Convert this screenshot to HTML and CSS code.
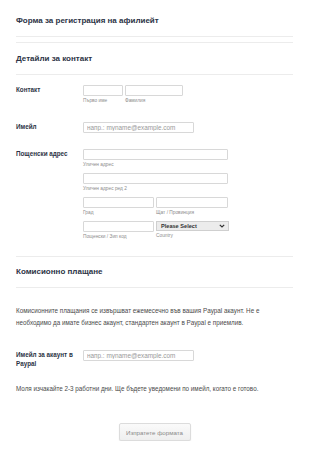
FILE: index.html
```html
<!DOCTYPE html>
<html lang="bg">
<head>
  <meta charset="UTF-8">
  <meta name="viewport" content="width=device-width, initial-scale=1.0">
  <title>Форма за регистрация на афилиейт</title>
  <link rel="stylesheet" href="styles.css">
</head>
<body>
  <form class="form">
    <div class="form-header first">
      <h1>Форма за регистрация на афилиейт</h1>
    </div>

    <div class="form-header">
      <h2>Детайли за контакт</h2>
    </div>

    <div class="row row-contact">
      <label class="row-label">Контакт</label>
      <div class="fields">
        <div class="field w-first">
          <input type="text">
          <span class="sub">Първо име</span>
        </div>
        <div class="field w-last">
          <input type="text">
          <span class="sub">Фамилия</span>
        </div>
      </div>
    </div>

    <div class="row row-email">
      <label class="row-label">Имейл</label>
      <div class="fields">
        <input class="w-email" type="text" placeholder="напр.: myname@example.com">
      </div>
    </div>

    <div class="row row-address">
      <label class="row-label">Пощенски адрес</label>
      <div class="address">
        <div class="field full">
          <input type="text">
          <span class="sub">Уличен адрес</span>
        </div>
        <div class="field full">
          <input type="text">
          <span class="sub">Уличен адрес ред 2</span>
        </div>
        <div class="field">
          <input type="text">
          <span class="sub">Град</span>
        </div>
        <div class="field">
          <input type="text">
          <span class="sub">Щат / Провинция</span>
        </div>
        <div class="field">
          <input type="text">
          <span class="sub">Пощенски / Зип код</span>
        </div>
        <div class="field">
          <div class="select">
            <span>Please Select</span>
            <svg width="6" height="4" viewBox="0 0 6 4"><path d="M0.8 0.8 L3 3 L5.2 0.8" fill="none" stroke="#333" stroke-width="1.2"/></svg>
          </div>
          <span class="sub">Country</span>
        </div>
      </div>
    </div>

    <div class="form-header section">
      <h2>Комисионно плащане</h2>
    </div>

    <p class="text first-text">Комисионните плащания се извършват ежемесечно във вашия Paypal акаунт. Не е необходимо да имате бизнес акаунт, стандартен акаунт в Paypal е приемлив.</p>

    <div class="row row-paypal">
      <label class="row-label">Имейл за акаунт в Paypal</label>
      <div class="fields">
        <input class="w-email" type="text" placeholder="напр.: myname@example.com">
      </div>
    </div>

    <p class="text note">Моля изчакайте 2-3 работни дни. Ще бъдете уведомени по имейл, когато е готово.</p>

    <div class="buttons">
      <button type="button" class="submit">Изпратете формата</button>
    </div>
  </form>
</body>
</html>
```

FILE: styles.css
```css
body {
  margin: 0;
  background: #fff;
  font-family: "Liberation Sans", Arial, sans-serif;
  color: #2c3345;
}

.form {
  width: 277px;
  padding-left: 16px;
}

.form-header {
  border-top: 1px solid #ececec;
  border-bottom: 1px solid #ececec;
  padding: 11px 0 10px;
  margin-top: 5px;
}

.form-header.first {
  border-top: none;
  margin-top: 0;
  padding-top: 16px;
}

.form-header.section {
  margin-top: 16px;
  padding-top: 10px;
}

h1, h2 {
  margin: 0;
  font-size: 8px;
  line-height: 10px;
  font-weight: bold;
  color: #2c3345;
}

.row {
  display: flex;
  align-items: flex-start;
}

.row-label {
  width: 67px;
  flex-shrink: 0;
  font-size: 6.3px;
  line-height: 10px;
  font-weight: bold;
  color: #2c3345;
}

.fields {
  display: flex;
  gap: 2px;
}

.field {
  display: flex;
  flex-direction: column;
}

input {
  box-sizing: border-box;
  height: 11px;
  margin: 0;
  padding: 0 3px;
  border: 1px solid #d8d8d8;
  border-radius: 1px;
  font-family: inherit;
  font-size: 6.4px;
  color: #555;
  background: #fff;
}

input::placeholder {
  color: #9a9a9a;
}

.sub {
  margin-top: 1px;
  font-size: 4.8px;
  line-height: 7px;
  color: #8d8d8d;
}

.w-first input { width: 40px; }
.w-last input { width: 58px; }
.w-email { width: 111px; }

.row-contact { margin-top: 10px; }
.row-email { margin-top: 18px; }
.row-address { margin-top: 16px; }

.address {
  display: grid;
  grid-template-columns: 71px 73px;
  column-gap: 2px;
  row-gap: 5px;
}

.address .full {
  grid-column: 1 / 3;
}

.address .field input { width: 71px; }
.address .field:nth-child(4) input { width: 72px; }
.address .full input { width: 145px; }

.select {
  box-sizing: border-box;
  height: 10px;
  width: 73px;
  display: flex;
  align-items: center;
  justify-content: space-between;
  padding: 0 3px 0 4px;
  border: 1px solid #cfcfcf;
  background: #ececec;
  font-size: 5.6px;
  font-weight: bold;
  color: #333;
}

.text {
  margin: 0;
  font-size: 6.3px;
  line-height: 12px;
  color: #4a4a4a;
}

.first-text {
  margin-top: 17px;
  width: 265px;
}

.row-paypal {
  margin-top: 21px;
}

.row-paypal .row-label {
  line-height: 9px;
}

.note {
  margin-top: 15px;
}

.buttons {
  display: flex;
  justify-content: center;
  margin-top: 28px;
}

.submit {
  width: 72px;
  height: 18px;
  padding: 0;
  border: 1px solid #dcdcdc;
  border-radius: 2px;
  background: linear-gradient(#fafafa, #efefef);
  box-shadow: 0 1px 1px rgba(0,0,0,0.12);
  font-family: inherit;
  font-size: 6.2px;
  color: #8a8a8a;
}
```
